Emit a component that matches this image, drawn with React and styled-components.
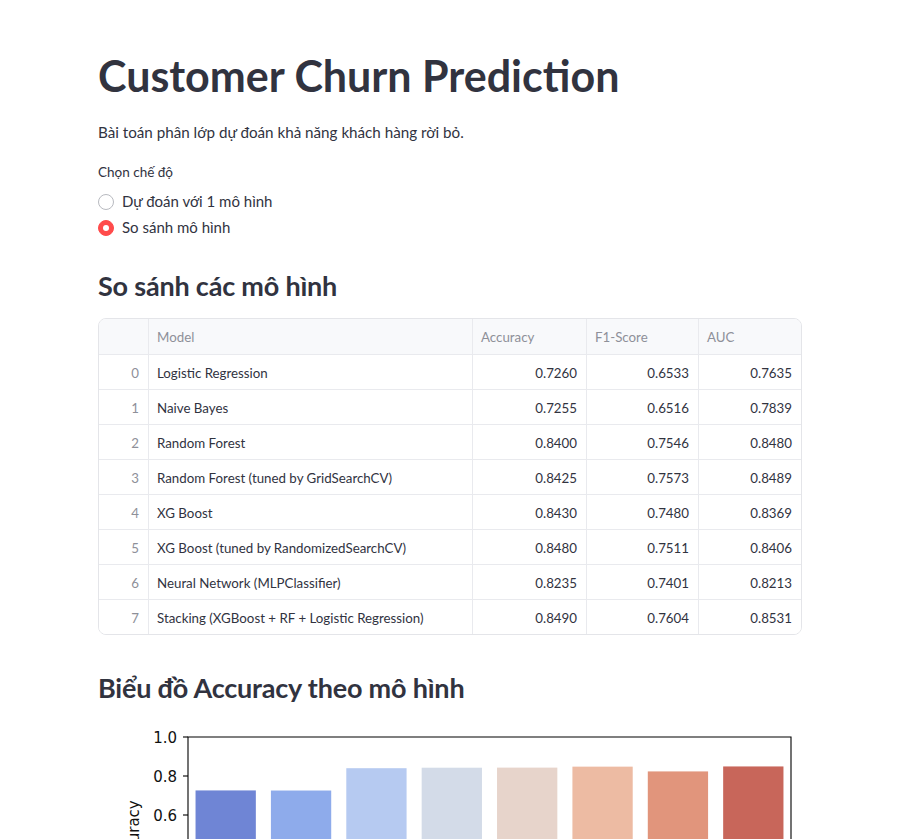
import React from 'react';
import styled, { createGlobalStyle } from 'styled-components';

const GlobalStyle = createGlobalStyle`
  body {
    margin: 0;
    background: #ffffff;
    color: #31333f;
    font-family: Lato, "Noto Sans", sans-serif;
  }
`;

// Page layout
const Page = styled.div`
  display: flex;
  justify-content: center;
  padding: 50px 21px 0 0;
`;

const Main = styled.main`
  width: 704px;
  display: flex;
  flex-direction: column;
`;

const Title = styled.h1`
  margin: 0;
  font-size: 43px;
  line-height: 52px;
  font-weight: 700;
  color: #31333f;
`;

const Text = styled.p`
  margin: 18px 0 0;
  font-size: 15.2px;
  line-height: 24px;
`;

const Heading = styled.h2`
  margin: ${({ $top }) => $top}px 0 0;
  font-size: 27px;
  letter-spacing: -0.2px;
  line-height: 36px;
  font-weight: 700;
  color: #31333f;
`;

// Radio group
const RadioLabel = styled.div`
  margin-top: 18px;
  font-size: 13.5px;
  line-height: 20px;
`;

const RadioGroup = styled.div`
  margin-top: 7px;
  display: flex;
  flex-direction: column;
  gap: 2px;
`;

const RadioRow = styled.label`
  display: flex;
  align-items: center;
  gap: 8px;
  height: 24px;
  font-size: 15px;
`;

const Dot = styled.span`
  box-sizing: border-box;
  width: 16px;
  height: 16px;
  margin-top: 2px;
  border-radius: 50%;
  display: flex;
  align-items: center;
  justify-content: center;
  border: 1px solid ${({ $on }) => ($on ? '#ff4b4b' : '#b8bac0')};
  background: ${({ $on }) => ($on ? '#ff4b4b' : '#ffffff')};
  &::after {
    content: '';
    width: 6px;
    height: 6px;
    border-radius: 50%;
    background: ${({ $on }) => ($on ? '#ffffff' : 'transparent')};
  }
`;

// Data table
const Table = styled.div`
  margin-top: 14px;
  border: 1px solid #e4e5e9;
  border-radius: 8px;
  overflow: hidden;
  font-size: 13.3px;
`;

const Row = styled.div`
  display: grid;
  grid-template-columns: 50px 324px 114px 112px 1fr;
  height: ${({ $head }) => ($head ? 35 : 34)}px;
  background: ${({ $head }) => ($head ? '#f8f9fb' : '#ffffff')};
  border-bottom: 1px solid #e9eaee;
  &:last-child {
    border-bottom: none;
  }
`;

const Cell = styled.div`
  display: flex;
  align-items: center;
  justify-content: ${({ $right }) => ($right ? 'flex-end' : 'flex-start')};
  padding: 1px 9px 0 8px;
  border-right: 1px solid #e9eaee;
  color: ${({ $muted }) => ($muted ? '#8e9099' : '#31333f')};
  white-space: nowrap;
  &:last-child {
    border-right: none;
  }
`;

const ChartBox = styled.div`
  height: 140px;
  overflow: hidden;
`;

const models = [
  ['Logistic Regression', 0.726, 0.6533, 0.7635],
  ['Naive Bayes', 0.7255, 0.6516, 0.7839],
  ['Random Forest', 0.84, 0.7546, 0.848],
  ['Random Forest (tuned by GridSearchCV)', 0.8425, 0.7573, 0.8489],
  ['XG Boost', 0.843, 0.748, 0.8369],
  ['XG Boost (tuned by RandomizedSearchCV)', 0.848, 0.7511, 0.8406],
  ['Neural Network (MLPClassifier)', 0.8235, 0.7401, 0.8213],
  ['Stacking (XGBoost + RF + Logistic Regression)', 0.849, 0.7604, 0.8531],
];

const palette = ['#6f85d5', '#8eabeb', '#b6caf1', '#d3dbe8', '#e7d4cb', '#edbba3', '#e1957c', '#c8665a'];

const AccuracyChart = () => {
  const top = 31;
  const unit = 195;
  const left = 90;
  const right = 693;
  const step = (right - left) / 8;
  const y = (v) => top + (1 - v) * unit;
  const ticks = [1.0, 0.8, 0.6, 0.4];
  return (
    <svg width="704" height="260" viewBox="0 0 704 260">
      {models.map((m, i) => (
        <rect
          key={m[0]}
          x={left + step * i + step * 0.1}
          y={y(m[1])}
          width={step * 0.8}
          height={unit * m[1]}
          fill={palette[i]}
        />
      ))}
      <path d={`M${left} 260 V${top} H${right} V260`} fill="none" stroke="#000" strokeWidth="1.1" />
      {ticks.map((t) => (
        <g key={t}>
          <line x1={left - 5} x2={left} y1={y(t)} y2={y(t)} stroke="#000" strokeWidth="1.1" />
          <text
            x={left - 11}
            y={y(t) + 5.5}
            textAnchor="end"
            fontFamily="'DejaVu Sans', sans-serif"
            fontSize="15"
            fill="#111"
          >
            {t.toFixed(1)}
          </text>
        </g>
      ))}
      <text
        transform="translate(41 128.5) rotate(-90)"
        textAnchor="middle"
        fontFamily="'DejaVu Sans', sans-serif"
        fontSize="15"
        fill="#111"
      >
        Accuracy
      </text>
    </svg>
  );
};

export default function App() {
  return (
    <>
      <GlobalStyle />
      <Page>
        <Main>
          <Title>Customer Churn Prediction</Title>
          <Text>Bài toán phân lớp dự đoán khả năng khách hàng rời bỏ.</Text>
          <RadioLabel>Chọn chế độ</RadioLabel>
          <RadioGroup>
            <RadioRow>
              <Dot />
              Dự đoán với 1 mô hình
            </RadioRow>
            <RadioRow>
              <Dot $on />
              So sánh mô hình
            </RadioRow>
          </RadioGroup>

          <Heading $top={29}>So sánh các mô hình</Heading>
          <Table>
            <Row $head>
              <Cell />
              <Cell $muted>Model</Cell>
              <Cell $muted>Accuracy</Cell>
              <Cell $muted>F1-Score</Cell>
              <Cell $muted>AUC</Cell>
            </Row>
            {models.map((m, i) => (
              <Row key={m[0]}>
                <Cell $right $muted>{i}</Cell>
                <Cell>{m[0]}</Cell>
                <Cell $right>{m[1].toFixed(4)}</Cell>
                <Cell $right>{m[2].toFixed(4)}</Cell>
                <Cell $right>{m[3].toFixed(4)}</Cell>
              </Row>
            ))}
          </Table>

          <Heading $top={35}>Biểu đồ Accuracy theo mô hình</Heading>
          <ChartBox>
            <AccuracyChart />
          </ChartBox>
        </Main>
      </Page>
    </>
  );
}
